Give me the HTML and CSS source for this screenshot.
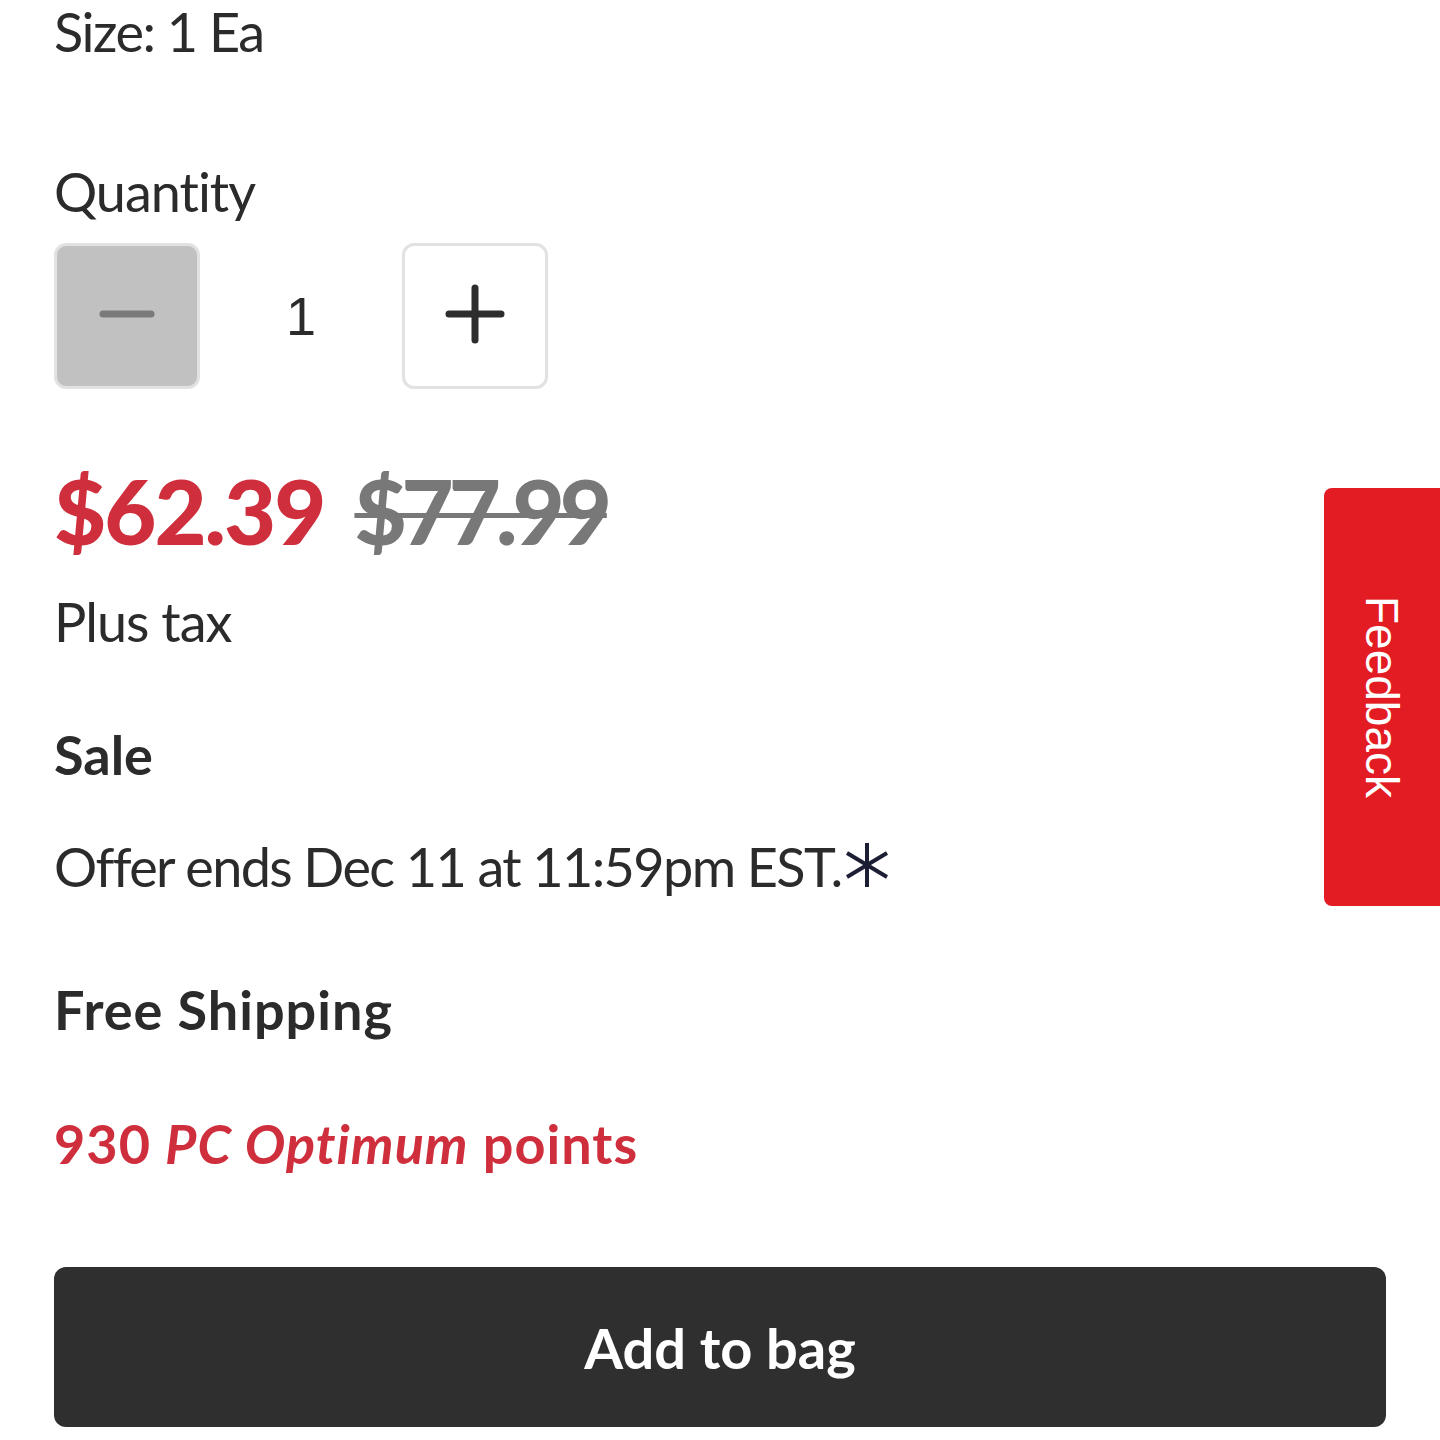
FILE: index.html
```html
<!DOCTYPE html>
<html lang="en">
<head>
<meta charset="utf-8">
<title>Product</title>
<link rel="stylesheet" href="styles.css">
</head>
<body>
<main class="page">
  <div class="size">Size: 1 Ea</div>
  <div class="qty-label">Quantity</div>
  <div class="qty-row">
    <button class="qty-btn qty-minus" aria-label="Decrease">
      <svg width="56" height="10" viewBox="0 0 56 10"><line x1="4" y1="5" x2="52" y2="5" stroke="#7a7a7a" stroke-width="7" stroke-linecap="round"/></svg>
    </button>
    <div class="qty-value">1</div>
    <button class="qty-btn qty-plus" aria-label="Increase">
      <svg width="60" height="60" viewBox="0 0 60 60"><line x1="4" y1="30" x2="56" y2="30" stroke="#2d2d2d" stroke-width="7" stroke-linecap="round"/><line x1="30" y1="4" x2="30" y2="56" stroke="#2d2d2d" stroke-width="7" stroke-linecap="round"/></svg>
    </button>
  </div>
  <div class="price-row">
    <span class="price-now">$62.39</span>
    <span class="price-was">$77.99</span>
  </div>
  <div class="tax">Plus tax</div>
  <div class="sale">Sale</div>
  <div class="offer">Offer ends Dec 11 at 11:59pm EST.<svg class="asterisk" width="46" height="44" viewBox="0 0 46 44"><g stroke="#1c1f33" stroke-width="4" stroke-linecap="butt"><line x1="23" y1="0" x2="23" y2="44"/><line x1="3" y1="10" x2="43" y2="34"/><line x1="3" y1="34" x2="43" y2="10"/></g></svg></div>
  <div class="shipping">Free Shipping</div>
  <div class="points">930 <em>PC Optimum</em> points</div>
  <button class="add-btn">Add to bag</button>
</main>
<div class="feedback"><span>Feedback</span></div>
</body>
</html>
```

FILE: styles.css
```css
html, body {
  margin: 0;
  padding: 0;
  background: #ffffff;
}
body {
  font-family: Lato, "Open Sans", sans-serif;
  color: #2b2b2b;
}
.page {
  padding: 0 54px;
  display: flex;
  flex-direction: column;
  align-items: flex-start;
}
.size {
  font-size: 54px;
  line-height: 64px;
  letter-spacing: -1.5px;
}
.qty-label {
  font-size: 54px;
  line-height: 64px;
  margin-top: 96px;
  letter-spacing: -1px;
}
.qty-row {
  margin-top: 19px;
  display: flex;
  align-items: center;
}
.qty-btn {
  width: 146px;
  height: 146px;
  box-sizing: border-box;
  border-radius: 12px;
  border: 3px solid #e2e2e2;
  display: flex;
  align-items: center;
  justify-content: center;
  padding: 0;
}
.qty-minus {
  background: #c1c1c1;
}
.qty-minus svg {
  margin-top: -4px;
}
.qty-plus {
  background: #ffffff;
}
.qty-plus svg {
  margin-top: -4px;
}
.qty-value {
  width: 202px;
  text-align: center;
  font-size: 54px;
  line-height: 64px;
  font-family: "Liberation Sans", Arial, sans-serif;
}
.price-row {
  margin-top: 71px;
  font-size: 90px;
  line-height: 100px;
  font-weight: 900;
  display: flex;
  gap: 30px;
}
.price-now {
  color: #cf2f3c;
  letter-spacing: -2px;
}
.price-was {
  color: #787878;
  letter-spacing: -5px;
  text-decoration: line-through;
  text-decoration-thickness: 5px;
}
.tax {
  margin-top: 30px;
  font-size: 54px;
  line-height: 64px;
  letter-spacing: -1px;
}
.sale {
  margin-top: 69px;
  font-size: 54px;
  line-height: 64px;
  font-weight: 700;
}
.offer {
  margin-top: 48px;
  font-size: 54px;
  line-height: 64px;
  letter-spacing: -1.6px;
  display: flex;
  align-items: flex-start;
}
.asterisk {
  margin-top: 8px;
  margin-left: 2px;
}
.shipping {
  margin-top: 79px;
  font-size: 54px;
  line-height: 64px;
  font-weight: 700;
  letter-spacing: 1px;
}
.points {
  margin-top: 70px;
  font-size: 54px;
  line-height: 64px;
  font-weight: 700;
  letter-spacing: 1px;
  color: #cf2f3c;
}
.points em {
  font-style: italic;
}
.add-btn {
  margin-top: 91px;
  width: 100%;
  height: 160px;
  border: none;
  border-radius: 12px;
  background: #2f2f2f;
  color: #ffffff;
  font-family: Lato, "Open Sans", sans-serif;
  font-size: 56px;
  font-weight: 700;
}
.feedback {
  position: fixed;
  right: 0;
  top: 488px;
  width: 116px;
  height: 418px;
  background: #e31b23;
  border-radius: 8px 0 0 8px;
  display: flex;
  align-items: center;
  justify-content: center;
}
.feedback span {
  writing-mode: vertical-rl;
  color: #ffffff;
  font-family: "Liberation Sans", Arial, sans-serif;
  font-size: 46px;
  line-height: 1;
}
```
